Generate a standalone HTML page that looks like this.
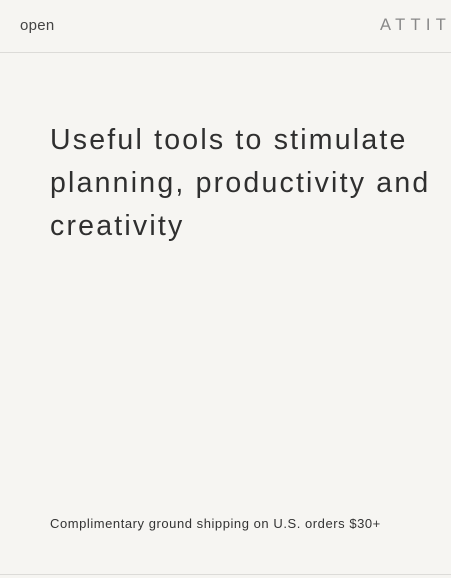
<!DOCTYPE html>
<html><head><style>
html,body{margin:0;padding:0;width:451px;height:578px;overflow:hidden;background:#f6f5f2;font-family:"Liberation Sans",sans-serif;color:#2b2b2b}
.hdr{position:absolute;top:0;left:0;width:451px;height:52px;border-bottom:1px solid #dcdbd8;overflow:hidden}
.open{position:absolute;left:20px;top:17px;font-size:15px;color:#444;letter-spacing:0.3px}
.logo{position:absolute;left:380px;top:16px;font-size:16.5px;letter-spacing:5.3px;color:#888;white-space:nowrap}
h1{position:absolute;left:50px;top:119px;margin:0;font-weight:normal;font-size:28.5px;line-height:43px;letter-spacing:2.2px;width:400px;color:#2f2f2f;white-space:nowrap}
.ship{position:absolute;left:50px;top:516px;font-size:13px;color:#333;letter-spacing:0.55px;white-space:nowrap}
.bot{position:absolute;left:0;top:574px;width:451px;border-top:1px solid #dcdbd8}
</style></head><body>
<div class="hdr"><span class="open">open</span><span class="logo">ATTITUDE</span></div>
<h1>Useful tools to stimulate<br>planning, productivity and<br>creativity</h1>
<div class="ship">Complimentary ground shipping on U.S. orders $30+</div>
<div class="bot"></div>
</body></html>
